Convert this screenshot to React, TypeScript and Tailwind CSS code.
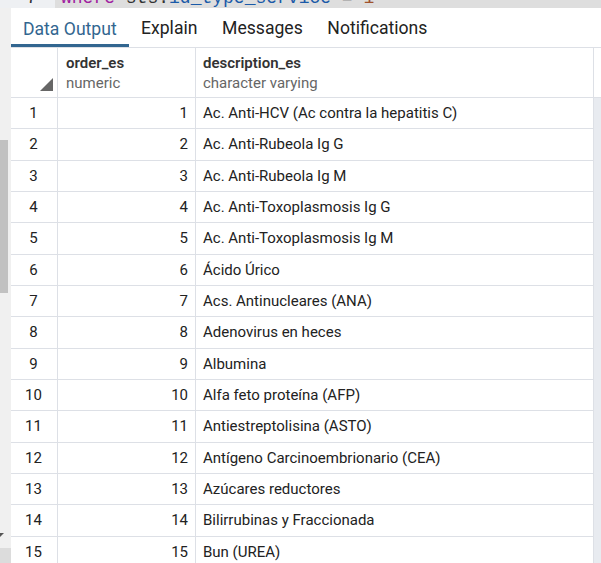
const rows: [number, string][] = [
  [1, "Ac. Anti-HCV (Ac contra la hepatitis C)"],
  [2, "Ac. Anti-Rubeola Ig G"],
  [3, "Ac. Anti-Rubeola Ig M"],
  [4, "Ac. Anti-Toxoplasmosis Ig G"],
  [5, "Ac. Anti-Toxoplasmosis Ig M"],
  [6, "Ácido Úrico"],
  [7, "Acs. Antinucleares (ANA)"],
  [8, "Adenovirus en heces"],
  [9, "Albumina"],
  [10, "Alfa feto proteína (AFP)"],
  [11, "Antiestreptolisina (ASTO)"],
  [12, "Antígeno Carcinoembrionario (CEA)"],
  [13, "Azúcares reductores"],
  [14, "Bilirrubinas y Fraccionada"],
  [15, "Bun (UREA)"],
];

const tabs = ["Data Output", "Explain", "Messages", "Notifications"];

export default function App() {
  return (
    <div className="w-[601px] h-[563px] overflow-hidden flex flex-col bg-white font-['Roboto',sans-serif] text-[#222]">
      {/* editor line peeking in at the top */}
      <div className="h-[8px] flex shrink-0 overflow-hidden font-['Liberation_Mono',monospace] text-[18px] leading-[18px]">
        <div className="w-[55px] bg-[#eef0f3] text-[#333] text-right pr-[18px]">
          <div className="-mt-[11px]">7</div>
        </div>
        <div className="flex-1 bg-[#dedede] pl-[6px] whitespace-pre">
          <div className="-mt-[11px]">
            <span className="text-[#a020a0]">where</span>
            <span className="text-[#333]"> sts.</span>
            <span className="text-[#1a5aa8]">id_type_service</span>
            <span className="text-[#333]"> = </span>
            <span className="text-[#a0522d]">1</span>
          </div>
        </div>
      </div>

      <div className="flex flex-1 min-h-0">
        {/* left scrollbar strip */}
        <div className="w-[11px] shrink-0 bg-[#f0f0f0] flex flex-col">
          <div className="h-[132px]" />
          <div className="w-[8px] h-[153px] bg-[#c1c1c1]" />
          <div className="flex-1" />
          <div className="h-[4px] flex items-start">
            <div className="w-0 h-0 border-t-[4px] border-t-[#555] border-r-[4px] border-r-transparent" />
          </div>
          <div className="h-[11px]" />
          <div className="h-[15px] bg-[#dcdcdc]" />
        </div>

        {/* results panel */}
        <div className="flex-1 flex flex-col min-w-0">
          <div className="h-[39px] flex items-end shrink-0">
            {tabs.map((t, i) => (
              <div
                key={t}
                className={
                  i === 0
                    ? "h-full px-[12px] flex items-center text-[17.6px] text-[#326690] border-b-[3px] border-[#326690] pt-[7px]"
                    : "h-full px-[12.3px] flex items-center text-[17.6px] text-[#222] pt-[4px] pb-[3px]"
                }
              >
                {t}
              </div>
            ))}
          </div>

          <div className="flex flex-col border-t border-[#dde0e6]">
            {/* header */}
            <div className="flex h-[50px] border-b border-[#dde0e6]">
              <div className="w-[47px] shrink-0 border-r border-[#dde0e6] flex items-end justify-end pr-[4px] pb-[6px]">
                <div className="w-0 h-0 border-b-[13px] border-b-[#666] border-l-[13px] border-l-transparent" />
              </div>
              <div className="w-[138px] shrink-0 border-r border-[#dde0e6] pl-[8px] pt-[5px] text-[15px] leading-[20px]">
                <div className="font-semibold text-[#333]">order_es</div>
                <div className="text-[#666]">numeric</div>
              </div>
              <div className="w-[398px] shrink-0 border-r border-[#dde0e6] pl-[7px] pt-[5px] text-[15px] leading-[20px]">
                <div className="font-semibold text-[#333]">description_es</div>
                <div className="text-[#666]">character varying</div>
              </div>
              <div className="flex-1" />
            </div>

            {/* body */}
            <div className="flex">
              <div className="flex flex-col">
                {rows.map(([n, d]) => (
                  <div key={n} className="flex h-[31.33px] border-b border-[#dde0e6] text-[15px] text-[#222]">
                    <div className="w-[47px] shrink-0 border-r border-[#dde0e6] flex items-center justify-center pr-[1px]">
                      {n}
                    </div>
                    <div className="w-[138px] shrink-0 border-r border-[#dde0e6] flex items-center justify-end pr-[7px]">
                      {n}
                    </div>
                    <div className="w-[398px] shrink-0 border-r border-[#dde0e6] flex items-center pl-[7px] whitespace-nowrap">
                      {d}
                    </div>
                  </div>
                ))}
              </div>
              <div className="flex-1 bg-[#e8ebf0]" />
            </div>
          </div>
        </div>
      </div>
    </div>
  );
}
